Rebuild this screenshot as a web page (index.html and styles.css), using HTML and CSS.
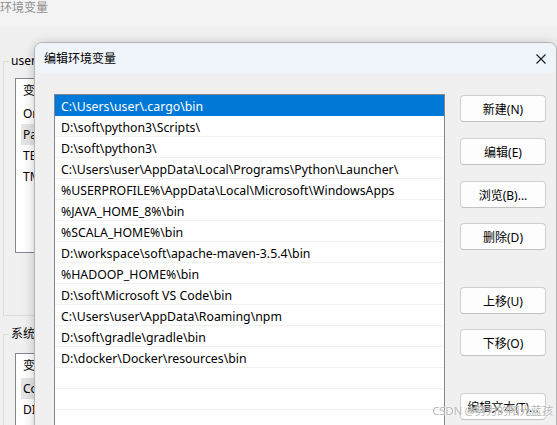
FILE: index.html
```html
<!DOCTYPE html>
<html lang="zh-CN">
<head>
<meta charset="utf-8">
<title>编辑环境变量</title>
<link rel="stylesheet" href="styles.css">
</head>
<body>
<div class="desktop">
  <!-- parent window: 环境变量 -->
  <div class="env-window">
    <div class="env-titlebar">环境变量</div>
    <fieldset class="group group-user">
      <legend>user 的用户变量(U)</legend>
      <div class="var-list">
        <div class="var-head">变量</div>
        <div class="var-row">OneDrive</div>
        <div class="var-row is-current">Path</div>
        <div class="var-row">TEMP</div>
        <div class="var-row">TMP</div>
      </div>
    </fieldset>
    <fieldset class="group group-system">
      <legend>系统变量(S)</legend>
      <div class="var-list">
        <div class="var-head">变量</div>
        <div class="var-row is-current">ComSpec</div>
        <div class="var-row">DIRCMD</div>
      </div>
    </fieldset>
  </div>

  <!-- modal dialog: 编辑环境变量 -->
  <section class="dialog">
    <header class="dialog-titlebar">
      <span class="dialog-title">编辑环境变量</span>
      <svg class="close-icon" width="10" height="10" viewBox="0 0 10 10" aria-hidden="true">
        <path d="M0.5 0.5 L9.5 9.5 M9.5 0.5 L0.5 9.5" stroke="#1b1b1b" stroke-width="1.1" fill="none"/>
      </svg>
    </header>
    <div class="dialog-body">
      <div class="path-list">
        <div class="path-row is-selected">C:\Users\user\.cargo\bin</div>
        <div class="path-row">D:\soft\python3\Scripts\</div>
        <div class="path-row">D:\soft\python3\</div>
        <div class="path-row">C:\Users\user\AppData\Local\Programs\Python\Launcher\</div>
        <div class="path-row">%USERPROFILE%\AppData\Local\Microsoft\WindowsApps</div>
        <div class="path-row">%JAVA_HOME_8%\bin</div>
        <div class="path-row">%SCALA_HOME%\bin</div>
        <div class="path-row">D:\workspace\soft\apache-maven-3.5.4\bin</div>
        <div class="path-row">%HADOOP_HOME%\bin</div>
        <div class="path-row">D:\soft\Microsoft VS Code\bin</div>
        <div class="path-row">C:\Users\user\AppData\Roaming\npm</div>
        <div class="path-row">D:\soft\gradle\gradle\bin</div>
        <div class="path-row">D:\docker\Docker\resources\bin</div>
        <div class="path-row"></div>
        <div class="path-row"></div>
        <div class="path-row"></div>
        <div class="path-row"></div>
      </div>
      <div class="actions">
        <button class="btn">新建(N)</button>
        <button class="btn">编辑(E)</button>
        <button class="btn">浏览(B)...</button>
        <button class="btn btn-tight">删除(D)</button>
        <button class="btn btn-spaced">上移(U)</button>
        <button class="btn btn-tight">下移(O)</button>
        <button class="btn btn-spaced">编辑文本(T)...</button>
      </div>
    </div>
  </section>

  <div class="watermark">CSDN @努力的阳光蓝孩</div>
</div>
</body>
</html>
```

FILE: styles.css
```css
* {
  box-sizing: border-box;
}

html,
body {
  margin: 0;
  padding: 0;
  width: 557px;
  height: 425px;
  overflow: hidden;
}

body {
  font-family: "Noto Sans", "Noto Sans CJK SC", sans-serif;
  font-size: 12px;
  color: #000;
}

.desktop {
  position: relative;
  width: 557px;
  height: 425px;
  overflow: hidden;
  background: #f0f0f0;
}

/* ---------- parent window ---------- */
.env-window {
  width: 557px;
  height: 425px;
  background: #f0f0f0;
}

.env-titlebar {
  height: 27px;
  line-height: 15px;
  color: #8f8f8f;
  background: #f3f3f3;
}

.group {
  margin: 0 0 0 3px;
  padding: 9px 0 62px 11px;
  border: 1px solid #dcdcdc;
  min-width: 0;
}

.group legend {
  margin-left: -6px;
  padding: 0 2px;
  line-height: 16px;
  white-space: nowrap;
}

.group-user {
  margin-top: 26px;
}

.group-system {
  margin-top: 10px;
  padding-top: 11px;
  padding-bottom: 0;
}

.var-list {
  width: 400px;
  height: 175px;
  border: 1px solid #828790;
  background: #fff;
}

.group-system .var-list {
  height: 120px;
}

.var-head {
  height: 24px;
  line-height: 24px;
  padding-left: 7px;
}

.var-row {
  height: 21px;
  line-height: 21px;
  margin-left: 5px;
  padding-left: 2px;
}

.var-row.is-current {
  background: #e5e5e5;
}

/* ---------- dialog ---------- */
.dialog {
  position: absolute;
  left: 34px;
  top: 42px;
  width: 523px;
  height: 420px;
  background: #f0f0f0;
  border: 1px solid #b4b4b4;
  border-radius: 8px;
  overflow: hidden;
  box-shadow: 0 2px 12px rgba(0, 0, 0, 0.22);
}

.dialog-titlebar {
  height: 30px;
  padding: 1px 10px 0 9px;
  display: flex;
  align-items: center;
  justify-content: space-between;
  background: #eef4f9;
}

.dialog-title {
  line-height: 16px;
}

.close-icon {
  display: block;
}

.dialog-body {
  display: flex;
  align-items: flex-start;
  gap: 15px;
  padding: 21px 0 0 19px;
}

.path-list {
  width: 391px;
  height: 400px;
  border: 1px solid #828790;
  background: #fff;
  flex: none;
  font-size: 12.3px;
}

.path-row {
  height: 21px;
  padding: 3px 0 0 6px;
  line-height: 17px;
  border-bottom: 1px solid #f0f0f0;
  white-space: nowrap;
}

.path-row.is-selected {
  background: #0078d7;
  color: #fff;
  border-bottom-color: #0078d7;
}

.actions {
  display: flex;
  flex-direction: column;
  gap: 16px;
  margin-top: 1px;
  flex: none;
}

.btn {
  width: 86px;
  height: 27px;
  padding: 1px 0 0;
  font: inherit;
  color: #000;
  background: #fdfdfd;
  border: 1px solid #d0d0d0;
  border-bottom-color: #c2c2c2;
  border-radius: 4px;
}

.btn-tight {
  margin-top: -1px;
}

.btn-spaced {
  margin-top: 21px;
}

/* ---------- watermark ---------- */
.watermark {
  position: absolute;
  right: 4px;
  bottom: 6px;
  font-size: 11.5px;
  line-height: 16px;
  letter-spacing: -0.3px;
  color: rgba(150, 150, 150, 0.7);
  text-shadow: 0 0 1px #fff, 0 0 2px #fff;
  white-space: nowrap;
}
```
